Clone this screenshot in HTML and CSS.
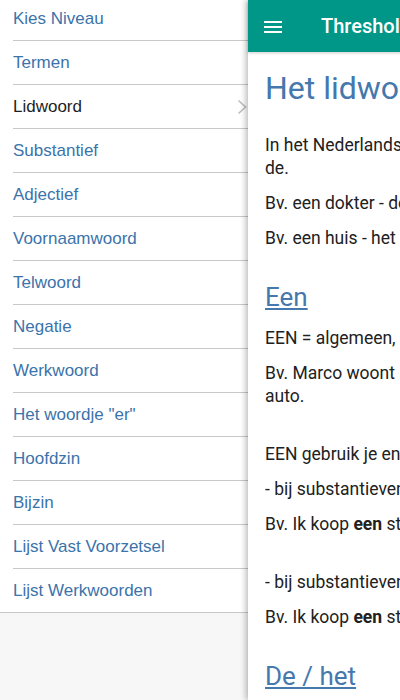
FILE: index.html
```html
<!doctype html>
<html>
<head>
    <meta charset="utf-8">
    <title>Threshold</title>
    <link rel="stylesheet" href="styles.css">
</head>
<body>
	<div class='app'>
		<div class='menu'>
			<ul>
				<li><a href="#">Kies Niveau</a></li>
				<li><a href="#">Termen</a></li>
				<li class='active'><a href="#">Lidwoord</a>
					<svg class='chevron' width="10" height="16" viewBox="0 0 10 16"><polyline points="1.5,1.5 8.5,8 1.5,14.5" fill="none" stroke="#bdbdbd" stroke-width="1.6"/></svg>
				</li>
				<li><a href="#">Substantief</a></li>
				<li><a href="#">Adjectief</a></li>
				<li><a href="#">Voornaamwoord</a></li>
				<li><a href="#">Telwoord</a></li>
				<li><a href="#">Negatie</a></li>
				<li><a href="#">Werkwoord</a></li>
				<li><a href="#">Het woordje "er"</a></li>
				<li><a href="#">Hoofdzin</a></li>
				<li><a href="#">Bijzin</a></li>
				<li><a href="#">Lijst Vast Voorzetsel</a></li>
				<li class='last'><a href="#">Lijst Werkwoorden</a></li>
			</ul>
		</div>
		<div class='page'>
			<div class='bar'>
				<span class='burger'><i></i><i></i><i></i></span>
				<span class='title'>Threshold 2</span>
			</div>
			<div class='content'>
				<h1>Het lidwoord</h1>
				<p>In het Nederlands zijn er 2 lidwoorden: het en de.</p>
				<p>Bv. een dokter - de dokter</p>
				<p>Bv. een huis - het huis</p>

				<h2>Een</h2>
				<p>EEN = algemeen, niet bepaald</p>
				<p>Bv. Marco woont in Italië. Hij heeft een mooie auto.<br>&nbsp;</p>
				<p>EEN gebruik je enkel</p>
				<p>- bij substantieven in het enkelvoud</p>
				<p>Bv. Ik koop <b>een</b> stoel.<br>&nbsp;</p>
				<p>- bij substantieven die je kunt tellen</p>
				<p>Bv. Ik koop <b>een</b> stoel.</p>

				<h2>De / het</h2>
			</div>
		</div>
	</div>
</body>
</html>
```

FILE: styles.css
```css
*{margin: 0;padding: 0;list-style: none;box-sizing: border-box;}
html,body{height: 100%;overflow: hidden;}
body{background: #fff;}
.app{display: flex;height: 100%;}

.menu{flex: 0 0 248px;background: #f7f7f7;font-family: "Liberation Sans", Arial, sans-serif;font-size: 17px;}
.menu ul{margin-top: -3px;background: #fff;}
.menu li{display: flex;align-items: center;height: 44px;margin-left: 13px;border-bottom: 1px solid #c8c8c8;padding-right: 1px;}
.menu li a{color: #3b73ab;text-decoration: none;}
.menu li.active a{color: #1e1e1e;}
.menu li .chevron{margin-left: auto;}
.menu li.last{margin-left: 0;padding-left: 13px;}

.page{flex: 0 0 400px;position: relative;background: #fff;box-shadow: -2px 0 6px rgba(0,0,0,.28);font-family: Roboto, "Noto Sans", sans-serif;}
.bar{height: 52px;background: #009688;display: flex;align-items: center;color: #fff;box-shadow: 0 1px 3px rgba(0,0,0,.2);}
.burger{display: flex;flex-direction: column;gap: 3px;width: 18px;margin-left: 16px;margin-top: 1px;}
.burger i{display: block;height: 2px;background: #fff;}
.title{margin-left: 39px;font-size: 20px;font-weight: 500;white-space: nowrap;}

.content{padding: 17px 17px 0;color: #212121;font-size: 17.5px;line-height: 23px;}
.content h1{font-size: 32px;line-height: 38px;font-weight: 400;color: #4578ad;margin-bottom: 27px;white-space: nowrap;}
.content h2{font-size: 26px;line-height: 30px;font-weight: 400;color: #4578ad;text-decoration: underline;margin: 32px 0 15px;}
.content p{margin-bottom: 12px;}
.content b{font-weight: 700;}
```
